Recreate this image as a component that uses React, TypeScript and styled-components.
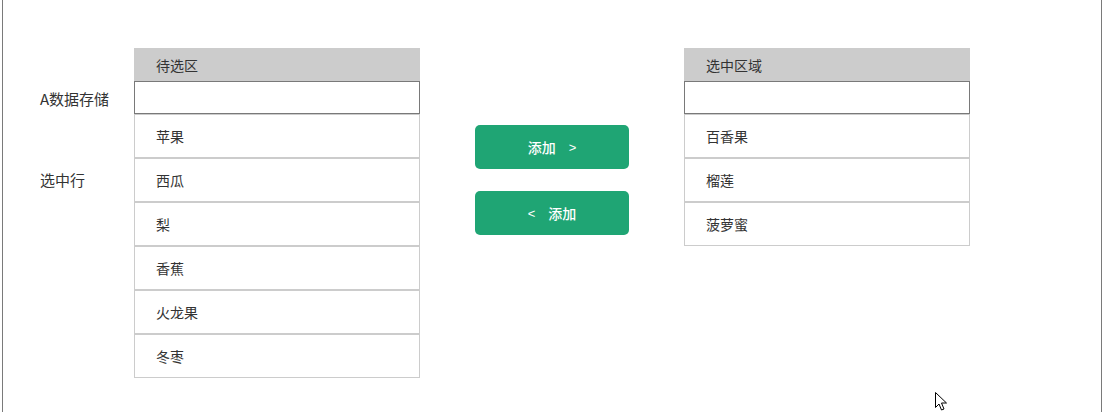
import React from "react";
import styled, { createGlobalStyle } from "styled-components";

const Global = createGlobalStyle`
  html, body { margin: 0; padding: 0; background: #fff; }
  body {
    font-family: "Microsoft YaHei", "Noto Sans CJK SC", "Noto Sans", sans-serif;
    color: #333;
    font-size: 14px;
  }
`;

const Frame = styled.div`
  position: relative;
  box-sizing: border-box;
  margin-left: 2px;
  width: 1100px;
  height: 412px;
  border-left: 1px solid #7a7a7a;
  border-right: 1px solid #7a7a7a;
  padding: 48px 0 0 37px;
  display: flex;
  align-items: flex-start;
`;

const LabelColumn = styled.div`
  width: 94px;
  display: flex;
  flex-direction: column;
`;

const Label = styled.div<{ $top: number }>`
  margin-top: ${(p) => p.$top}px;
  height: 20px;
  line-height: 20px;
  font-size: 15px;
  color: #333;
  white-space: nowrap;
`;

const Panel = styled.div`
  width: 286px;
  display: flex;
  flex-direction: column;
`;

const PanelHeader = styled.div`
  height: 33px;
  background: #cccccc;
  padding-left: 22px;
  display: flex;
  align-items: center;
  font-size: 14px;
  color: #333;
  box-sizing: border-box;
`;

const SearchInput = styled.input`
  box-sizing: border-box;
  width: 286px;
  height: 33px;
  margin: 0;
  border: 1px solid #797979;
  outline: none;
  padding: 0 8px;
  font-family: inherit;
  font-size: 14px;
`;

const Row = styled.div`
  box-sizing: border-box;
  height: 44px;
  border: 1px solid #cccccc;
  padding-left: 21px;
  display: flex;
  align-items: center;
  font-size: 14px;
  color: #333;
`;

const ButtonColumn = styled.div`
  width: 154px;
  margin: 77px 55px 0;
  display: flex;
  flex-direction: column;
  gap: 22px;
`;

const MoveButton = styled.button`
  box-sizing: border-box;
  height: 44px;
  width: 154px;
  border: none;
  border-radius: 5px;
  background: #1fa574;
  color: #fff;
  font-family: inherit;
  font-size: 14px;
  font-weight: 500;
  display: flex;
  align-items: center;
  justify-content: center;
  gap: 13px;
  padding: 0;
  cursor: pointer;
`;

const Arrow = styled.span`
  font-weight: 400;
  font-family: "Liberation Sans", Arial, sans-serif;
  font-size: 13px;
`;

const Cursor = styled.svg`
  position: absolute;
  left: 931px;
  top: 391px;
`;

const leftItems = ["苹果", "西瓜", "梨", "香蕉", "火龙果", "冬枣"];
const rightItems = ["百香果", "榴莲", "菠萝蜜"];

export default function App() {
  return (
    <>
      <Global />
      <Frame>
        <LabelColumn>
          <Label $top={41}>A数据存储</Label>
          <Label $top={61}>选中行</Label>
        </LabelColumn>
        <Panel>
          <PanelHeader>待选区</PanelHeader>
          <SearchInput />
          {leftItems.map((t) => (
            <Row key={t}>{t}</Row>
          ))}
        </Panel>
        <ButtonColumn>
          <MoveButton>
            <span>添加</span>
            <Arrow>&gt;</Arrow>
          </MoveButton>
          <MoveButton>
            <Arrow>&lt;</Arrow>
            <span>添加</span>
          </MoveButton>
        </ButtonColumn>
        <Panel>
          <PanelHeader>选中区域</PanelHeader>
          <SearchInput />
          {rightItems.map((t) => (
            <Row key={t}>{t}</Row>
          ))}
        </Panel>
        <Cursor width="14" height="21" viewBox="0 0 14 21">
          <path
            d="M1.5 1.5 L1.5 16.5 L5 13 L7.5 19 L10 18 L7.5 12 L12.5 12 Z"
            fill="#fff"
            stroke="#000"
            strokeWidth="1"
            strokeLinejoin="miter"
          />
        </Cursor>
      </Frame>
    </>
  );
}
